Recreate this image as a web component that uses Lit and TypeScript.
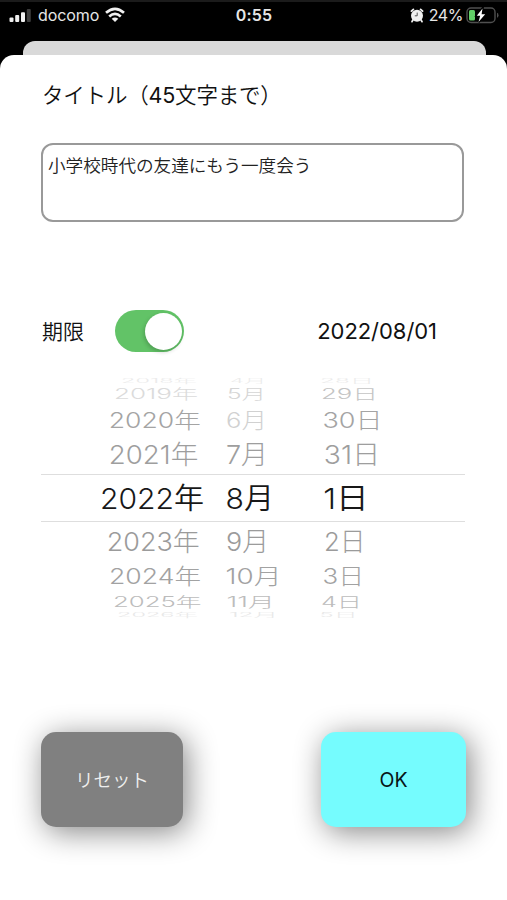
import { LitElement, html, css, svg } from "lit";
import { customElement, property } from "lit/decorators.js";

interface Cell { text: string; x: number; width: number; opacity?: number }
interface Row { height: number; squash: number; color: string; cells: Cell[] }

const ROWS: Row[] = [
  { height: 5, squash: 0.2, color: "#ebebeb", cells: [{ text: "2018年", x: 121, width: 76 }, { text: "4月", x: 230, width: 36 }, { text: "28日", x: 320, width: 54 }] },
  { height: 21, squash: 0.48, color: "#c4c4c4", cells: [{ text: "2019年", x: 114, width: 84, opacity: 0.6 }, { text: "5月", x: 227, width: 39, opacity: 0.7 }, { text: "29日", x: 321, width: 57 }] },
  { height: 31, squash: 0.75, color: "#a4a4a4", cells: [{ text: "2020年", x: 108.8, width: 92 }, { text: "6月", x: 226, width: 41, opacity: 0.5 }, { text: "30日", x: 322.5, width: 60 }] },
  { height: 39, squash: 0.9, color: "#9e9e9e", cells: [{ text: "2021年", x: 108.8, width: 89.5 }, { text: "7月", x: 226, width: 42 }, { text: "31日", x: 323.8, width: 56.5 }] },
  { height: 48, squash: 1, color: "#181818", cells: [{ text: "2022年", x: 100, width: 104 }, { text: "8月", x: 225.6, width: 48.5 }, { text: "1日", x: 323.2, width: 45.5 }] },
  { height: 38, squash: 0.9, color: "#9b9b9b", cells: [{ text: "2023年", x: 106.8, width: 93 }, { text: "9月", x: 226, width: 43 }, { text: "2日", x: 324, width: 41.5 }] },
  { height: 32, squash: 0.74, color: "#a2a2a2", cells: [{ text: "2024年", x: 109, width: 92 }, { text: "10月", x: 225.5, width: 56 }, { text: "3日", x: 322.5, width: 41.5 }] },
  { height: 20, squash: 0.48, color: "#bcbcbc", cells: [{ text: "2025年", x: 113, width: 88.5 }, { text: "11月", x: 226.5, width: 48.5 }, { text: "4日", x: 321, width: 41 }] },
  { height: 6, squash: 0.2, color: "#e8e8e8", cells: [{ text: "2026年", x: 117, width: 81 }, { text: "12月", x: 229, width: 49 }, { text: "5日", x: 319.5, width: 38 }] },
];

@customElement("date-wheel")
export class DateWheel extends LitElement {
  static styles = css`
    :host { display: block; width: 424px; height: 240px; }
    .row { display: block; width: 424px; box-sizing: border-box; overflow: visible; }
    .selected { border-top: 1px solid #dedede; border-bottom: 1px solid #dedede; }
    text { font: 300 29px Inter, "Noto Sans CJK JP", sans-serif; }
    .selected text { font-weight: 350; }
  `;

  render() {
    return ROWS.map((row) => {
      const inner = row.squash === 1 ? row.height - 2 : row.height;
      return html`<svg class="row ${row.squash === 1 ? "selected" : ""}" height=${row.height} fill=${row.color}>
        ${row.cells.map((c) => svg`<text
          transform="translate(${c.x - 41} ${inner / 2 + 10.7 * row.squash}) scale(1 ${row.squash})"
          textLength=${c.width} lengthAdjust="spacingAndGlyphs" opacity=${c.opacity ?? 1}>${c.text}</text>`)}
      </svg>`;
    });
  }
}

@customElement("toggle-switch")
export class ToggleSwitch extends LitElement {
  @property({ type: Boolean }) on = false;
  static styles = css`
    :host { display: flex; align-items: center; justify-content: flex-start; box-sizing: border-box; width: 69px; height: 42px; padding: 0 2.5px; border-radius: 21px; background: #ddd; }
    :host([on]) { justify-content: flex-end; background: #62c367; }
    .knob { width: 37px; height: 37px; border-radius: 50%; background: #fff; box-shadow: -1px 2px 4px rgba(0, 0, 0, 0.2); }
  `;
  render() { return html`<div class="knob"></div>`; }
}

@customElement("app-root")
export class AppRoot extends LitElement {
  static styles = css`
    :host { display: flex; flex-direction: column; width: 507px; height: 900px; overflow: hidden; background: #000; color: #111; font-family: Inter, "Noto Sans CJK JP", sans-serif; }
    .status { flex: none; display: grid; grid-template-columns: 1fr auto 1fr; align-items: center; box-sizing: border-box; height: 41px; padding: 0 8px 13px 9px; border-top: 2px solid #1b1b1b; color: #e6e6e6; font-size: 16px; line-height: 20px; }
    .left, .right { display: flex; align-items: center; }
    .right { justify-content: flex-end; }
    .carrier { margin: 0 6px 0 6px; letter-spacing: -0.1px; }
    .time { font-weight: 600; letter-spacing: 0.2px; }
    .percent { margin: 0 3px 0 5px; letter-spacing: -0.4px; }
    svg { display: block; flex: none; }
    .behind { flex: none; height: 14px; margin: 0 21.5px 0 22.5px; border-radius: 12px 12px 0 0; background: #d9d9d9; }
    .sheet { flex: 1; display: flex; flex-direction: column; box-sizing: border-box; padding: 0 41px; border-radius: 14px 14px 0 0; background: #fff; }
    .title { margin-top: 24px; margin-left: 1px; height: 32px; line-height: 32px; font-size: 21.5px; font-weight: 350; letter-spacing: -0.2px; white-space: nowrap; }
    .count { font-weight: 400; }
    .input { box-sizing: border-box; width: 423px; height: 79px; margin-top: 32px; padding: 9px 5px; border: 2px solid #999; border-radius: 12px; font-size: 17.6px; font-weight: 350; line-height: 24px; color: #222; white-space: nowrap; }
    .deadline { display: flex; align-items: center; height: 42px; margin-top: 88px; font-size: 21px; font-weight: 350; }
    .label { margin: 0 0 2px 1px; }
    .switch { margin-left: 31px; }
    .date { margin-left: auto; margin-right: 29px; font-size: 22px; font-weight: 400; letter-spacing: -0.05px; }
    .wheel { flex: none; margin-top: 26px; }
    .buttons { display: flex; justify-content: space-between; margin-top: 114px; }
    .button { display: flex; align-items: center; justify-content: center; box-sizing: border-box; width: 142px; height: 95px; border-radius: 15px; font-size: 18.5px; box-shadow: 4px 5px 30px rgba(0, 0, 0, 0.48); }
    .reset { padding-bottom: 2px; background: #808080; color: #eee; font-weight: 350; }
    .ok { width: 145px; background: #75fcfe; color: #071416; font-size: 19.5px; }
  `;

  render() {
    return html`
      <div class="status">
        <div class="left">
          <svg width="23" height="16" fill="#f0f0f0">
            <rect x="0.5" y="10.5" width="4" height="4.5" rx="1"/><rect x="6.2" y="8" width="4" height="7" rx="1"/>
            <rect x="12" y="5.2" width="4" height="9.8" rx="1"/><rect x="17.8" y="2" width="4" height="13" rx="1" fill="#3c3c3c"/>
          </svg>
          <span class="carrier">docomo</span>
          <svg width="20" height="16" viewBox="0 0 20 16" fill="none" stroke="#f0f0f0" stroke-width="2.7">
            <path d="M1 5.8Q10 -2 19 5.8"/><path d="M4.2 9.4Q10 4.4 15.8 9.4"/><path d="M10 15L6.7 11.8Q10 9.2 13.3 11.8Z" fill="#f0f0f0" stroke="none"/>
          </svg>
        </div>
        <span class="time">0:55</span>
        <div class="right">
          <svg width="14" height="15" viewBox="0 0 14 15">
            <circle cx="7" cy="7.7" r="6" fill="#f0f0f0"/>
            <path d="M1.4 3.2L3.4 1.4M12.6 3.2L10.6 1.4M2.9 12L2 13.6M11.1 12L12 13.6" stroke="#f0f0f0" stroke-width="1.8" stroke-linecap="round"/>
            <path d="M7.2 4.6V7.8H4.8" fill="none" stroke="#555" stroke-width="1"/>
          </svg>
          <span class="percent">24%</span>
          <svg width="33" height="17" viewBox="0 0 33 17">
            <rect x="1" y="1" width="28" height="14.5" rx="4" fill="none" stroke="#505050" stroke-width="1.4"/>
            <path d="M31 5.8Q32.5 6 32.5 8.2T31 10.8Z" fill="#505050"/>
            <rect x="3" y="3" width="6" height="10.5" rx="1.5" fill="#62cf67"/>
            <path d="M16.5 1.5L10.8 8.8H14.2L12.5 15L19.2 7.2H15.6Z" fill="#fff" stroke="#000" stroke-width="2.4" paint-order="stroke"/>
          </svg>
        </div>
      </div>
      <div class="behind"></div>
      <div class="sheet">
        <div class="title">タイトル（<span class="count">45</span>文字まで）</div>
        <div class="input">小学校時代の友達にもう一度会う</div>
        <div class="deadline">
          <span class="label">期限</span>
          <toggle-switch class="switch" on></toggle-switch>
          <span class="date">2022/08/01</span>
        </div>
        <date-wheel class="wheel"></date-wheel>
        <div class="buttons">
          <div class="button reset">リセット</div>
          <div class="button ok">OK</div>
        </div>
      </div>`;
  }
}
